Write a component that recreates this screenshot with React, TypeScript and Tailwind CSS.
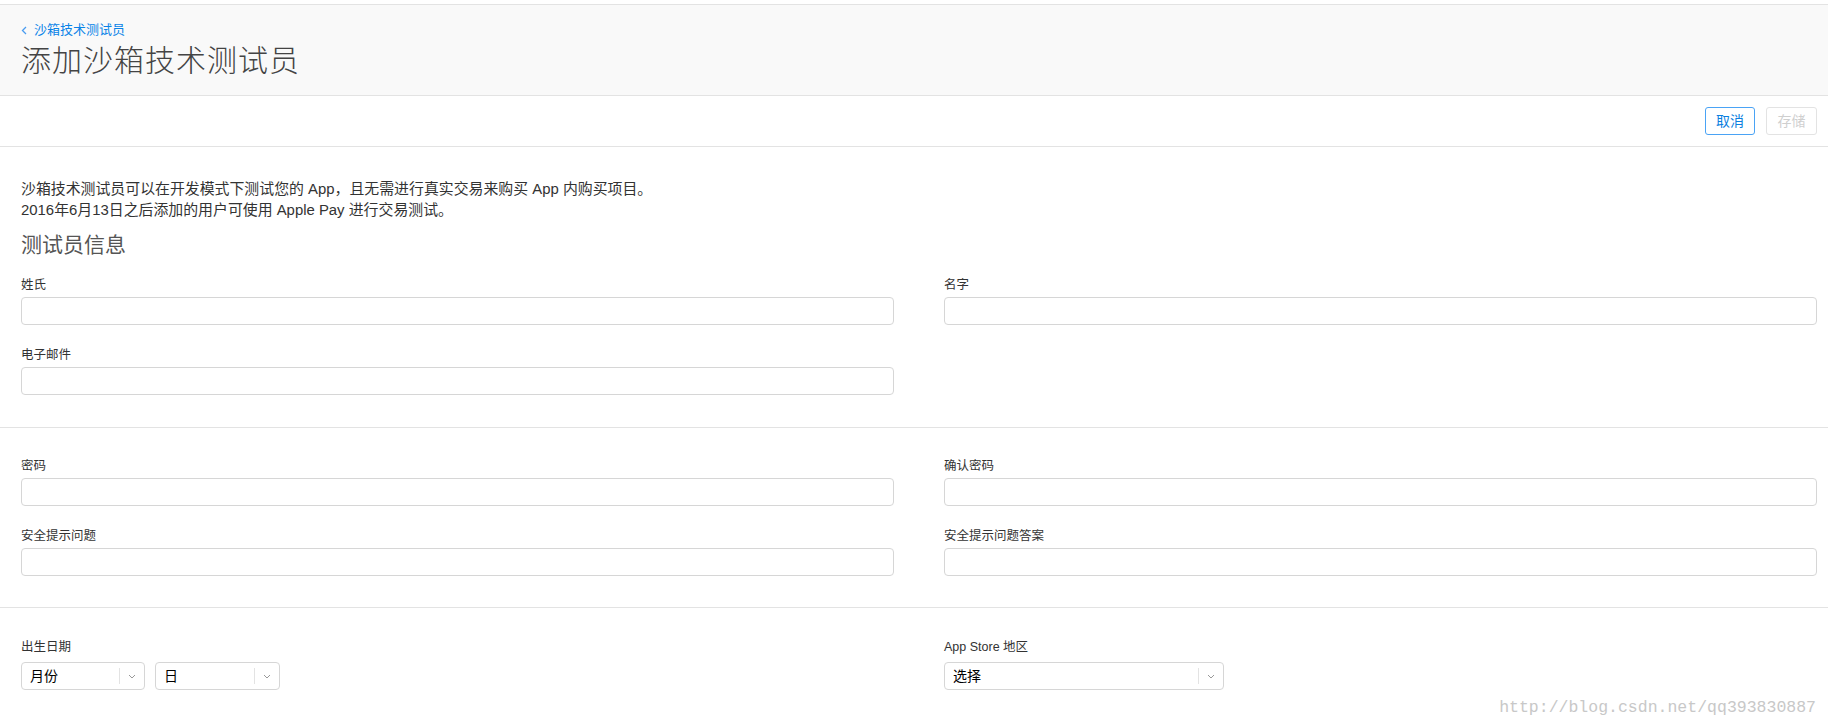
import React from "react";

const font = { fontFamily: '"Liberation Sans", "Noto Sans CJK SC", sans-serif' };

function Field({ label }: { label: string }) {
  return (
    <div className="flex flex-col">
      <label className="text-[12.5px] leading-[16px] text-[#333] mb-[4px]">{label}</label>
      <input className="h-[28px] w-full rounded-[4px] border border-[#d6d6d6] bg-white px-2 text-[14px] outline-none" />
    </div>
  );
}

function Select({ value, width }: { value: string; width: string }) {
  return (
    <div className={`flex h-[28px] items-center rounded-[4px] border border-[#d6d6d6] bg-white ${width}`}>
      <span className="flex-1 pl-[8px] text-[14px] text-black">{value}</span>
      <span className="h-[16px] w-px bg-[#e3e3e3]" />
      <span className="flex w-[24px] justify-center">
        <svg width="8" height="5" viewBox="0 0 8 5" fill="none">
          <path d="M1 1l3 3 3-3" stroke="#999" strokeWidth="1" />
        </svg>
      </span>
    </div>
  );
}

export default function App() {
  return (
    <div className="relative min-h-[726px] bg-white text-[#333]" style={font}>
      <div className="h-[5px] border-b border-[#e3e3e3]" />
      <div className="h-[91px] border-b border-[#e3e3e3] bg-[#f9f9f9] px-[21px] pt-[15px]">
        <a className="flex items-center gap-[7px] text-[13px] leading-[20px] text-[#0a84e8]">
          <svg width="6" height="9" viewBox="0 0 6 9" fill="none">
            <path d="M5 1L1.5 4.5 5 8" stroke="#4a9cf0" strokeWidth="1.3" />
          </svg>
          <span>沙箱技术测试员</span>
        </a>
        <h1 className="mt-[1px] text-[30px] font-light leading-[40px] tracking-[1px] text-[#444]">添加沙箱技术测试员</h1>
      </div>
      <div className="flex h-[51px] items-center justify-end gap-[11px] border-b border-[#e3e3e3] pr-[11px]">
        <button className="h-[28px] w-[50px] rounded-[3px] border border-[#4aa3f5] text-[14px] text-[#0b7fe0]">取消</button>
        <button className="h-[28px] w-[51px] rounded-[3px] border border-[#e3e3e3] text-[14px] text-[#cfcfcf]">存储</button>
      </div>

      <div className="pl-[21px] pr-[11px]">
        <div className="pt-[32px] text-[14.9px] leading-[21px] text-[#333]">
          <p>沙箱技术测试员可以在开发模式下测试您的 App，且无需进行真实交易来购买 App 内购买项目。</p>
          <p>2016年6月13日之后添加的用户可使用 Apple Pay 进行交易测试。</p>
        </div>
        <h2 className="mt-[11px] text-[21px] leading-[26px] text-[#555]">测试员信息</h2>
        <div className="mt-[19px] grid grid-cols-2 gap-x-[50px] gap-y-[22px] pb-[32px]">
          <Field label="姓氏" />
          <Field label="名字" />
          <Field label="电子邮件" />
        </div>
      </div>
      <div className="border-t border-[#e3e3e3]" />
      <div className="grid grid-cols-2 gap-x-[50px] gap-y-[22px] pb-[31px] pl-[21px] pr-[11px] pt-[30px]">
        <Field label="密码" />
        <Field label="确认密码" />
        <Field label="安全提示问题" />
        <Field label="安全提示问题答案" />
      </div>
      <div className="border-t border-[#e3e3e3]" />
      <div className="grid grid-cols-2 gap-x-[50px] pl-[21px] pr-[11px] pt-[31px]">
        <div className="flex flex-col">
          <label className="mb-[7px] text-[12.5px] leading-[16px] text-[#333]">出生日期</label>
          <div className="flex gap-[10px]">
            <Select value="月份" width="w-[124px]" />
            <Select value="日" width="w-[125px]" />
          </div>
        </div>
        <div className="flex flex-col">
          <label className="mb-[7px] text-[12.5px] leading-[16px] text-[#333]">App Store 地区</label>
          <Select value="选择" width="w-[280px]" />
        </div>
      </div>
      <div
        className="absolute bottom-[8px] right-[12px] text-[16.5px] leading-[20px] text-[#c8c8c8]"
        style={{ fontFamily: '"Liberation Mono", monospace' }}
      >
        http://blog.csdn.net/qq393830887
      </div>
    </div>
  );
}
